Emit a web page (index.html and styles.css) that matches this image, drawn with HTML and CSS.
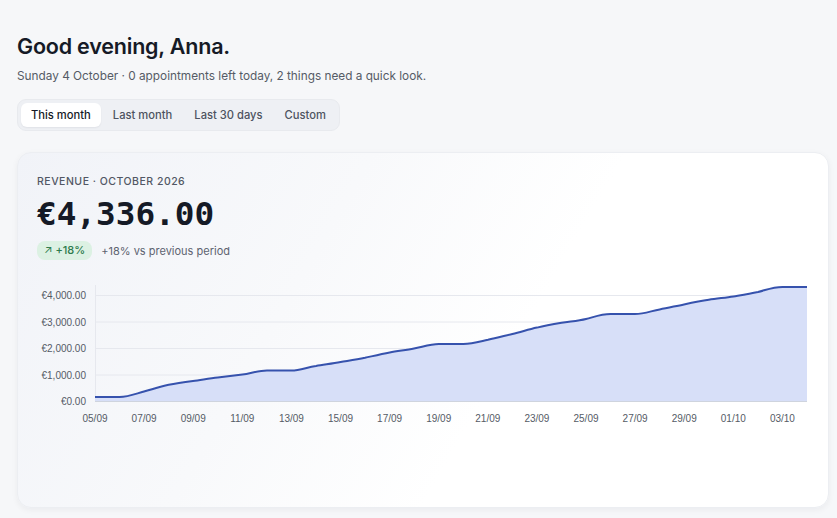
FILE: index.html
```html
<!DOCTYPE html>
<html>
<head>
<meta charset="utf-8">
<link rel="stylesheet" href="styles.css">
</head>
<body>
<main class="page">
  <h1 class="greeting">Good evening, Anna.</h1>
  <p class="subtitle">Sunday 4 October · 0 appointments left today, 2 things need a quick look.</p>
  <nav class="tabs">
    <button class="tab active">This month</button>
    <button class="tab">Last month</button>
    <button class="tab">Last 30 days</button>
    <button class="tab">Custom</button>
  </nav>
  <section class="card">
    <div class="label">Revenue · October 2026</div>
    <div class="amount">€4,336.00</div>
    <div class="delta-row">
      <span class="badge"><span class="arrow">↗</span> +18%</span>
      <span class="delta-text">+18% vs previous period</span>
    </div>
    <svg class="chart" width="780" height="150" viewBox="37 282 780 150">
      <g class="grid">
        <line x1="95" x2="807" y1="295.5" y2="295.5"/>
        <line x1="95" x2="807" y1="322" y2="322"/>
        <line x1="95" x2="807" y1="348.5" y2="348.5"/>
        <line x1="95" x2="807" y1="375" y2="375"/>
        <line x1="95.5" x2="95.5" y1="285" y2="401"/>
      </g>
      <path class="area" d="M95 397 L119.6 397 C128 397 135 394 144 391.5 C153 389 160 386.5 168.7 384.8 C177 383 185 382 193 381 C201 380 209 378.6 217.8 377.6 C226 376.6 234 375.6 242.4 374.6 C251 373.4 258 370.5 267 370.5 L291.5 370.5 C300 370.5 307 367.2 316 366 C324 364.6 332 363.6 340.6 362 C349 360.6 356 359.6 365 357.8 C373 356 381 354 389.7 352.4 C398 350.8 406 350 414 348.4 C422 347 430 344.2 438.8 344 L463.3 344 C472 344 479 341.8 488 339.8 C496 337.8 504 336 512.4 334 C521 332 528 329.6 537 327.6 C545 325.6 553 324.2 561.5 322.8 C570 321.4 578 321 586 319 C594 317 601 314 610.6 314 L635 314 C644 314 651 311 659.7 309.4 C668 307.8 676 306 684 304.4 C692 302.8 700 301.2 708.8 299.8 C717 298.4 725 297.8 733.4 296.4 C742 295 749 294 758 292 C766 290 773 287 782.5 287 L807 287 L807 401 L95 401 Z"/>
      <path class="line" d="M95 397 L119.6 397 C128 397 135 394 144 391.5 C153 389 160 386.5 168.7 384.8 C177 383 185 382 193 381 C201 380 209 378.6 217.8 377.6 C226 376.6 234 375.6 242.4 374.6 C251 373.4 258 370.5 267 370.5 L291.5 370.5 C300 370.5 307 367.2 316 366 C324 364.6 332 363.6 340.6 362 C349 360.6 356 359.6 365 357.8 C373 356 381 354 389.7 352.4 C398 350.8 406 350 414 348.4 C422 347 430 344.2 438.8 344 L463.3 344 C472 344 479 341.8 488 339.8 C496 337.8 504 336 512.4 334 C521 332 528 329.6 537 327.6 C545 325.6 553 324.2 561.5 322.8 C570 321.4 578 321 586 319 C594 317 601 314 610.6 314 L635 314 C644 314 651 311 659.7 309.4 C668 307.8 676 306 684 304.4 C692 302.8 700 301.2 708.8 299.8 C717 298.4 725 297.8 733.4 296.4 C742 295 749 294 758 292 C766 290 773 287 782.5 287 L807 287"/>
      <line class="baseline" x1="95" x2="807" y1="401.5" y2="401.5"/>
      <g class="ylabels">
        <text x="86" y="299">€4,000.00</text>
        <text x="86" y="325.5">€3,000.00</text>
        <text x="86" y="352">€2,000.00</text>
        <text x="86" y="378.5">€1,000.00</text>
        <text x="86" y="405">€0.00</text>
      </g>
      <g class="xlabels">
        <text x="95" y="422">05/09</text>
        <text x="144.1" y="422">07/09</text>
        <text x="193.2" y="422">09/09</text>
        <text x="242.3" y="422">11/09</text>
        <text x="291.4" y="422">13/09</text>
        <text x="340.5" y="422">15/09</text>
        <text x="389.6" y="422">17/09</text>
        <text x="438.7" y="422">19/09</text>
        <text x="487.8" y="422">21/09</text>
        <text x="536.9" y="422">23/09</text>
        <text x="586" y="422">25/09</text>
        <text x="635.1" y="422">27/09</text>
        <text x="684.2" y="422">29/09</text>
        <text x="733.3" y="422">01/10</text>
        <text x="782.4" y="422">03/10</text>
      </g>
    </svg>
  </section>
</main>
</body>
</html>
```

FILE: styles.css
```css
* { box-sizing: border-box; }
html, body { margin: 0; padding: 0; }
body {
  background: #f6f7f9;
  font-family: Inter, "Noto Sans", sans-serif;
  color: #141824;
}
.page {
  padding: 32px 8px 0 17px;
  width: 837px;
  height: 518px;
  overflow: hidden;
}
.greeting {
  margin: 0;
  font-size: 21.5px;
  font-weight: 600;
  line-height: 28px;
  letter-spacing: -0.2px;
  color: #151a26;
}
.subtitle {
  margin: 8px 0 0;
  font-size: 11.8px;
  line-height: 16px;
  color: #555b66;
}
.tabs {
  margin-top: 15px;
  display: inline-flex;
  gap: 2px;
  padding: 3px;
  background: #eef0f4;
  border: 1px solid #e8eaee;
  border-radius: 9px;
}
.tab {
  font-family: Inter, "Noto Sans", sans-serif;
  font-size: 11.2px;
  font-weight: 500;
  color: #4d5360;
  background: transparent;
  border: 0;
  border-radius: 6px;
  height: 24px;
  padding: 0 10px;
  line-height: 24px;
}
.tab.active {
  background: #fff;
  color: #151a26;
  box-shadow: 0 1px 2px rgba(20, 24, 36, 0.06);
}
.card {
  margin-top: 21px;
  width: 812px;
  height: 356px;
  border-radius: 14px;
  border: 1px solid #eceef2;
  background: linear-gradient(120deg, #f1f3f8 0%, #f8f9fb 35%, #ffffff 60%);
  box-shadow: 0 2px 6px rgba(20, 24, 36, 0.05);
  padding: 22px 0 0 19px;
}
.label {
  font-size: 10.5px;
  font-weight: 500;
  letter-spacing: 0.5px;
  text-transform: uppercase;
  color: #515764;
  line-height: 14px;
}
.amount {
  margin-top: 5px;
  font-family: "DejaVu Sans Mono", "Liberation Mono", monospace;
  font-weight: 700;
  font-size: 32.7px;
  line-height: 40px;
  color: #151a26;
}
.delta-row {
  margin-top: 7px;
  display: flex;
  align-items: center;
  gap: 9px;
}
.badge {
  background: #dcf1e3;
  color: #2d7a4c;
  font-size: 11px;
  font-weight: 500;
  border-radius: 8px;
  padding: 0 7px;
  height: 19px;
  line-height: 19px;
}
.arrow { font-weight: 400; }
.delta-text {
  font-size: 11px;
  color: #5d6370;
}
.chart {
  display: block;
  margin: 22px 0 0 0;
  overflow: visible;
}
.grid line { stroke: #e6e8ee; stroke-width: 1; }
.baseline { stroke: #cfd4de; stroke-width: 1; }
.area { fill: #d7dff8; }
.line { fill: none; stroke: #3652ad; stroke-width: 2; stroke-linejoin: round; }
.ylabels text {
  font-family: "Liberation Sans", Arial, sans-serif;
  font-size: 10px;
  fill: #555b66;
  text-anchor: end;
}
.xlabels text {
  font-family: "Liberation Sans", Arial, sans-serif;
  font-size: 10px;
  fill: #555b66;
  text-anchor: middle;
}
```
